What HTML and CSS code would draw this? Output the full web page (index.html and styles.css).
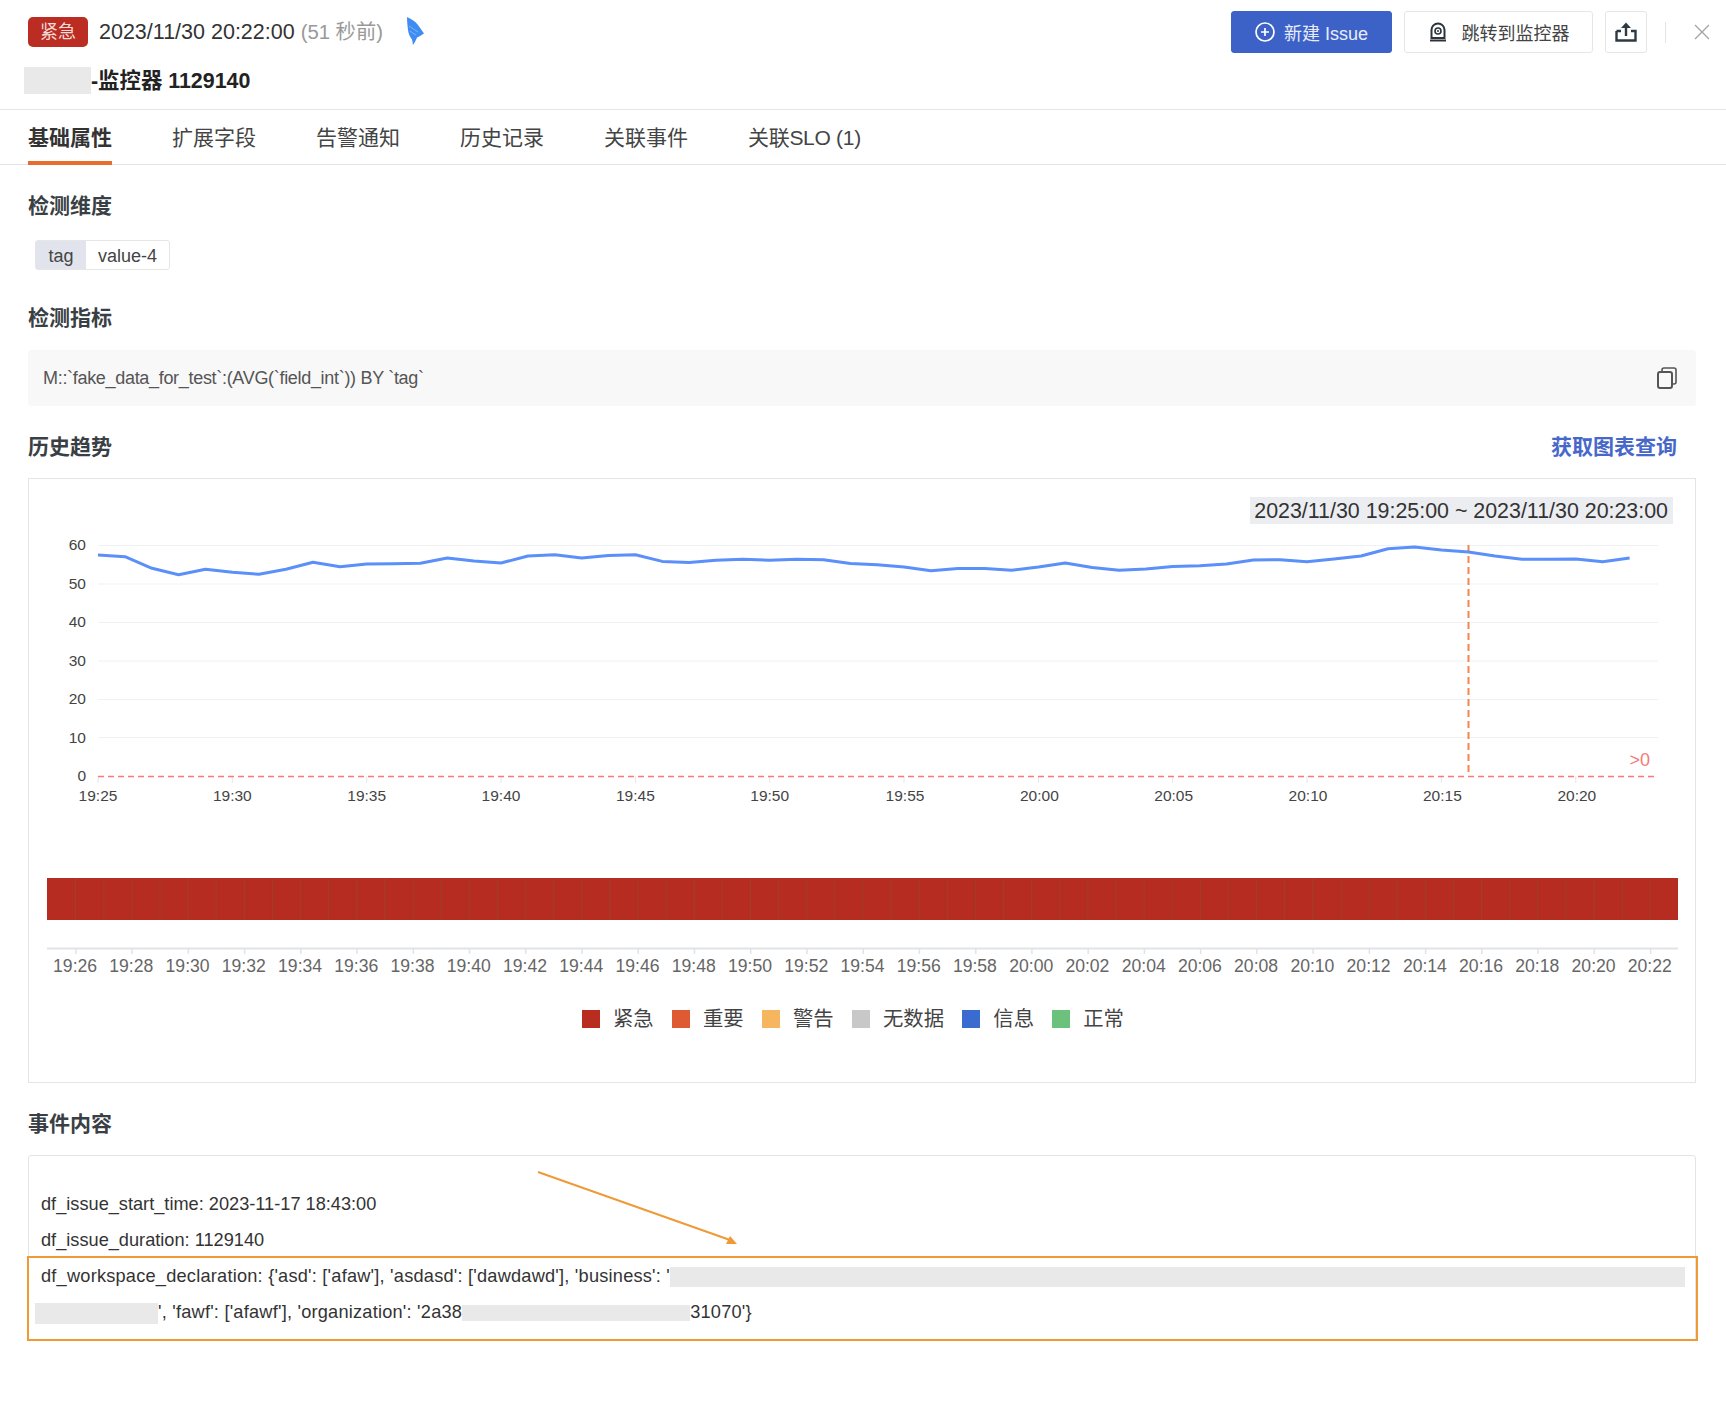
FILE: index.html
```html
<!DOCTYPE html>
<html>
<head>
	<title>紧急事件详情</title>
	<link rel="stylesheet" href="styles.css">
</head>
<body>
<div class="page">
	<div class="head">
		<div class="head-row">
			<span class="badge">紧急</span>
			<span class="time">2023/11/30 20:22:00 <span class="ago">(51 秒前)</span></span>
			<svg class="bird" viewBox="0 0 17 28"><path d="M0 0C4 2 8 4 11 8L17 16.5C15 18 12 19.5 10 20.5C9 23 7.5 26 6 28C5.5 26 5.5 24 5 22.5C3 20 1.5 17 1 13C0.5 9 0 4 0 0Z" fill="#3f8cf2"/><path d="M2 9C5 11 8 13 11 15M3 14C5 15.5 7 17 9 18" stroke="#7fb4f8" stroke-width="1" fill="none"/></svg>
			<div class="actions">
				<button class="btn primary">
					<svg viewBox="0 0 20 20"><circle cx="10" cy="10" r="9" fill="none" stroke="#fff" stroke-width="1.7"/><path d="M10 6V14M6 10H14" stroke="#fff" stroke-width="1.7"/></svg>
					新建 Issue
				</button>
				<button class="btn monitor">
					<svg viewBox="0 0 18 20"><path d="M2.5 16V8A6.5 6.5 0 0 1 15.5 8V16Z" fill="none" stroke="#2c333a" stroke-width="2"/><circle cx="9" cy="9" r="3" fill="none" stroke="#2c333a" stroke-width="1.6"/><circle cx="9" cy="9" r="1" fill="#2c333a"/><path d="M1 18.5H17" stroke="#2c333a" stroke-width="2"/></svg>
					跳转到监控器
				</button>
				<button class="btn share">
					<svg viewBox="0 0 22 20"><path d="M1.5 9V18.5H20.5V9H16M6 9H1.5" fill="none" stroke="#2c3a45" stroke-width="2.4"/><path d="M11 14V3" stroke="#2c3a45" stroke-width="2.4"/><path d="M6 6L11 0.5L16 6Z" fill="#2c3a45"/></svg>
				</button>
				<span class="divider"></span>
				<svg class="close" viewBox="0 0 16 16"><path d="M1 1L15 15M15 1L1 15" stroke="#a3a3a3" stroke-width="1.3"/></svg>
			</div>
		</div>
		<div class="title"><span class="redact title-redact"></span>-监控器 1129140</div>
	</div>

	<ul class="tabs">
		<li class="tab active">基础属性</li>
		<li class="tab">扩展字段</li>
		<li class="tab">告警通知</li>
		<li class="tab">历史记录</li>
		<li class="tab">关联事件</li>
		<li class="tab tab-slo">关联SLO (1)</li>
	</ul>

	<div class="content">
		<h3 class="sec first">检测维度</h3>
		<div class="tag"><span class="tag-key">tag</span><span class="tag-val">value-4</span></div>

		<h3 class="sec">检测指标</h3>
		<div class="query">
			<span>M::`fake_data_for_test`:(AVG(`field_int`)) BY `tag`</span>
			<svg class="copy" viewBox="0 0 20 22"><rect x="1" y="5" width="14" height="16" rx="2" fill="none" stroke="#555" stroke-width="2"/><path d="M5 5V3A2 2 0 0 1 7 1H17A2 2 0 0 1 19 3V15A2 2 0 0 1 17 17H15" fill="none" stroke="#555" stroke-width="1.6"/></svg>
		</div>

		<div class="sec-row">
			<h3 class="sec">历史趋势</h3>
			<a class="sec-link">获取图表查询</a>
		</div>
		<div class="card chart-card">
			<div class="range-row"><span class="range">2023/11/30 19:25:00 ~ 2023/11/30 20:23:00</span></div>
			<svg class="chart" viewBox="29 530 1666 460">
				<g class="grid">
					<path d="M98 545.5H1658M98 584H1658M98 622.5H1658M98 661H1658M98 699.5H1658M98 737.5H1658"/>
				</g>
				<g class="ylab">
					<text x="86" y="550">60</text>
					<text x="86" y="589">50</text>
					<text x="86" y="627">40</text>
					<text x="86" y="666">30</text>
					<text x="86" y="704">20</text>
					<text x="86" y="743">10</text>
					<text x="86" y="781">0</text>
				</g>
				<path class="ticks" d="M98 776V783M232.3 776V783M366.7 776V783M501 776V783M635.4 776V783M769.7 776V783M904 776V783M1038.4 776V783M1172.7 776V783M1307 776V783M1441.4 776V783M1575.8 776V783"/>
				<g class="xlab">
					<text x="98" y="801">19:25</text>
					<text x="232.3" y="801">19:30</text>
					<text x="366.7" y="801">19:35</text>
					<text x="501" y="801">19:40</text>
					<text x="635.4" y="801">19:45</text>
					<text x="769.7" y="801">19:50</text>
					<text x="905" y="801">19:55</text>
					<text x="1039.4" y="801">20:00</text>
					<text x="1173.7" y="801">20:05</text>
					<text x="1308" y="801">20:10</text>
					<text x="1442.4" y="801">20:15</text>
					<text x="1576.8" y="801">20:20</text>
				</g>
				<path class="threshold" d="M98 776.5H1658"/>
				<text class="threshold-label" x="1650" y="766">&gt;0</text>
				<path class="marker" d="M1468.5 545V776"/>
				<polyline class="series" points="98,555 125,556.7 152,568.3 178.6,574.7 205.5,569.3 232.4,572.3 259,574.3 286,569.3 313,562.3 340,566.7 366.7,564 393.6,563.7 420.4,563.3 447.3,558 474,561 501,563 527.9,556 554.8,554.8 581.7,558 608.5,555.4 635.4,554.8 662.3,561.4 689.1,562.5 716,560.3 742.9,559.2 769.8,560.3 796.6,559.2 823.5,559.8 850.4,563.6 877.2,564.7 904.1,566.9 931,570.8 957.8,568.6 984.7,568.6 1011.6,570.2 1038.5,566.9 1065.3,563 1092.2,567.5 1119.1,570.2 1145.9,569.1 1172.8,566.4 1199.7,565.7 1226.5,564 1253.4,560 1280,559.7 1307,561.7 1334,559 1361,556 1388,548.7 1414.6,547 1441.5,550 1468.4,552 1495,556 1522,559.3 1549,559.3 1575.8,559 1602.7,561.7 1629.6,558"/>

				<rect class="band" x="47" y="878" width="1631" height="42"/>
				<path class="seams" d="M75.1 899H1678"/>
				<path class="axis" d="M47 948.5H1678"/>
				<path class="axis-ticks" d="M75.1 951H1678"/>
				<g class="tlab">
					<text x="75.1" y="972">19:26</text>
					<text x="131.3" y="972">19:28</text>
					<text x="187.6" y="972">19:30</text>
					<text x="243.8" y="972">19:32</text>
					<text x="300.1" y="972">19:34</text>
					<text x="356.3" y="972">19:36</text>
					<text x="412.5" y="972">19:38</text>
					<text x="468.8" y="972">19:40</text>
					<text x="525" y="972">19:42</text>
					<text x="581.3" y="972">19:44</text>
					<text x="637.5" y="972">19:46</text>
					<text x="693.7" y="972">19:48</text>
					<text x="750" y="972">19:50</text>
					<text x="806.2" y="972">19:52</text>
					<text x="862.5" y="972">19:54</text>
					<text x="918.7" y="972">19:56</text>
					<text x="974.9" y="972">19:58</text>
					<text x="1031.2" y="972">20:00</text>
					<text x="1087.4" y="972">20:02</text>
					<text x="1143.7" y="972">20:04</text>
					<text x="1199.9" y="972">20:06</text>
					<text x="1256.1" y="972">20:08</text>
					<text x="1312.4" y="972">20:10</text>
					<text x="1368.6" y="972">20:12</text>
					<text x="1424.9" y="972">20:14</text>
					<text x="1481.1" y="972">20:16</text>
					<text x="1537.3" y="972">20:18</text>
					<text x="1593.6" y="972">20:20</text>
					<text x="1649.8" y="972">20:22</text>
				</g>
			</svg>
			<ul class="legend">
				<li><i class="c-critical"></i>紧急</li>
				<li><i class="c-major"></i>重要</li>
				<li><i class="c-warn"></i>警告</li>
				<li><i class="c-nodata"></i>无数据</li>
				<li><i class="c-info"></i>信息</li>
				<li><i class="c-ok"></i>正常</li>
			</ul>
		</div>

		<h3 class="sec after-card">事件内容</h3>
		<div class="card event-card">
			<div class="line">df_issue_start_time: 2023-11-17 18:43:00</div>
			<div class="line">df_issue_duration: 1129140</div>
			<div class="line wide">df_workspace_declaration: {'asd': ['afaw'], 'asdasd': ['dawdawd'], 'business': '<span class="redact r1"></span></div>
			<div class="line wide"><span class="redact r2"></span>', 'fawf': ['afawf'], 'organization': '2a38<span class="redact r3"></span>31070'}</div>
			<div class="highlight"></div>
			<svg class="arrow" viewBox="0 0 204 76"><path d="M2 2L194 70" stroke="#f09a37" stroke-width="2"/><path d="M201 74L190 74L194 66Z" fill="#f09a37"/></svg>
		</div>
	</div>
</div>
</body>
</html>
```

FILE: styles.css
```css
*{margin: 0;padding: 0;box-sizing: border-box;}
ul{list-style: none;}
body{background: #fff;color: #333;font-family: "Liberation Sans", "Noto Sans CJK SC", sans-serif;}
.page{width: 1726px;min-height: 1406px;}

/* head */
.head{height: 110px;border-bottom: 1px solid #e4e4e4;padding: 11px 16px 0 0;}
.head-row{display: flex;align-items: center;height: 42px;padding-left: 28px;}
.badge{width: 60px;height: 30px;line-height: 30px;background: #bb2c22;color: #f4dcd9;border-radius: 5px;text-align: center;font-size: 18px;}
.time{font-size: 21.5px;line-height: 43px;height: 42px;margin-left: 11px;color: #333;}
.ago{color: #999;font-size: 20.3px;}
.bird{width: 17px;height: 28px;margin-left: 24px;margin-top: -3px;}
.actions{display: flex;align-items: center;margin-left: auto;}
.btn{height: 42px;display: flex;align-items: center;justify-content: center;border: 1px solid #e6e6e6;border-radius: 3px;background: #fff;font-family: inherit;font-size: 18px;color: #444;}
.btn svg{height: 20px;width: 20px;}
.primary{width: 161px;background: #3d62c7;border-color: #3d62c7;color: #e8ecf8;gap: 9px;}
.monitor{width: 189px;margin-left: 12px;gap: 14px;}
.share{width: 42px;margin-left: 12px;}
.share svg{width: 22px;}
.divider{width: 1px;height: 21px;background: #e4e4e4;margin-left: 18px;}
.close{width: 16px;height: 16px;margin-left: 28px;}
.title{height: 27px;line-height: 28px;margin-top: 14px;padding-left: 24px;font-size: 21.4px;font-weight: bold;color: #222;display: flex;}
.redact{display: inline-block;background: #e9e9e9;}
.title-redact{width: 67px;height: 27px;}

/* tabs */
.tabs{display: flex;gap: 60px;height: 55px;padding-left: 28px;border-bottom: 1px solid #e4e4e4;}
.tab{font-size: 21px;line-height: 55px;height: 55px;color: #444;}
.tab.active{font-weight: bold;color: #333;border-bottom: 4px solid #e96c2f;}
.tab-slo{letter-spacing: -.3px;}

/* sections */
.content{padding: 0 30px 0 28px;}
.sec{font-size: 21px;line-height: 32px;font-weight: bold;color: #3a3f45;margin-top: 32px;}
.sec.first{margin-top: 25px;}
.sec.after-card{margin-top: 25px;}
.tag{display: inline-flex;height: 30px;line-height: 30px;margin: 18px 0 0 7px;border: 1px solid #e6e6e6;border-radius: 3px;font-size: 18px;color: #444;vertical-align: top;}
.tag-key{width: 50px;text-align: center;background: #e1e4ec;}
.tag-val{width: 83px;text-align: center;}
.query{display: flex;justify-content: space-between;align-items: center;height: 56px;margin-top: 16px;padding: 0 19px 0 15px;background: #f8f8f8;border-radius: 3px;font-size: 18px;letter-spacing: -.31px;color: #555;}
.copy{width: 20px;height: 22px;}
.sec-row{display: flex;justify-content: space-between;align-items: center;height: 32px;margin-top: 25px;padding-right: 19px;}
.sec-row .sec{margin-top: 0;}
.sec-link{display: block;line-height: 32px;font-size: 21px;font-weight: bold;color: #4768c9;}

/* chart */
.card{border: 1px solid #e4e4e4;margin-top: 15px;}
.chart-card{height: 605px;}
.range-row{display: flex;justify-content: flex-end;padding: 18px 22px 0 0;}
.range{height: 27px;line-height: 29px;padding: 0 5px 0 4px;background: #ebedf0;font-size: 21.4px;color: #333;}
.chart{display: block;width: 1666px;height: 460px;margin-top: 6px;}
.grid path{stroke: #f0f1f3;stroke-width: 1;fill: none;}
.ylab text{font-size: 15.5px;fill: #444;text-anchor: end;}
.xlab text{font-size: 15.5px;fill: #444;text-anchor: middle;}
.ticks{stroke: #e4e6ea;stroke-width: 1;fill: none;}
.threshold{stroke: #f77;stroke-width: 1.4;stroke-dasharray: 6 4;fill: none;}
.threshold-label{font-size: 18px;fill: #f47a7a;text-anchor: end;}
.marker{stroke: #f5854a;stroke-width: 2;stroke-dasharray: 7 4;fill: none;}
.series{stroke: #5b8ff9;stroke-width: 3;fill: none;stroke-linejoin: round;}
.band{fill: #b72c20;}
.seams{stroke: #7c5a3a;stroke-opacity: .42;stroke-width: 42;stroke-dasharray: 1 27.12;fill: none;}
.axis{stroke: #e0e3e8;stroke-width: 2;fill: none;}
.axis-ticks{stroke: #e0e3e8;stroke-width: 6;stroke-dasharray: 1.5 54.74;fill: none;}
.tlab text{font-size: 17.6px;fill: #666;text-anchor: middle;}
.legend{display: flex;justify-content: center;gap: 18.2px;margin-top: 19px;padding-right: 18px;font-size: 20.4px;line-height: 20px;color: #444;}
.legend li{display: flex;align-items: center;gap: 13px;}
.legend i{display: block;width: 18px;height: 18px;}
.c-critical{background: #b92c20;}
.c-major{background: #dd5a33;}
.c-warn{background: #f5b65f;}
.c-nodata{background: #c8c8c8;}
.c-info{background: #3a6bd0;}
.c-ok{background: #6cc27c;}

/* event */
.event-card{position: relative;height: 186px;padding: 30px 0 0 12px;border-radius: 3px;}
.line{height: 36px;line-height: 36px;font-size: 18.2px;color: #333;white-space: nowrap;}
.line.wide{letter-spacing: .22px;}
.r1{width: 1015px;height: 20px;vertical-align: middle;}
.r2{width: 123px;height: 21px;margin-left: -6px;vertical-align: middle;}
.r3{width: 228px;height: 16px;vertical-align: middle;}
.highlight{position: absolute;left: -2px;top: 100px;width: 1671px;height: 85px;border: 2px solid #f09a37;}
.arrow{position: absolute;left: 507px;top: 14px;width: 204px;height: 76px;}
```
